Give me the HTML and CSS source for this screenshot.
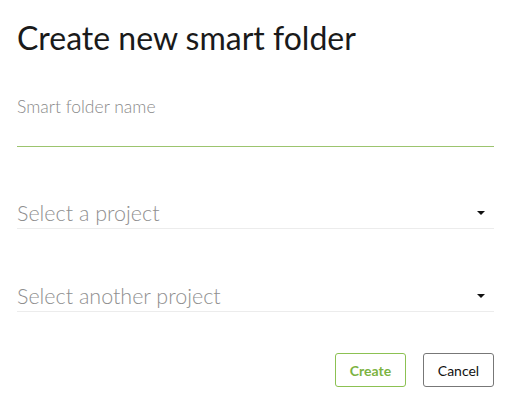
FILE: index.html
```html
<!DOCTYPE html>
<html>
<head>
<meta charset="utf-8">
<link rel="stylesheet" href="styles.css">
</head>
<body>
<div class="dialog">
  <h1 class="title">Create new smart folder</h1>
  <div class="field name-field">
    <label class="field-label">Smart folder name</label>
    <div class="underline active"></div>
  </div>
  <div class="field select-field">
    <div class="select-row">
      <span class="placeholder">Select a project</span>
      <span class="caret"></span>
    </div>
    <div class="underline"></div>
  </div>
  <div class="field select-field">
    <div class="select-row">
      <span class="placeholder">Select another project</span>
      <span class="caret"></span>
    </div>
    <div class="underline"></div>
  </div>
  <div class="actions">
    <button class="btn btn-create">Create</button>
    <button class="btn btn-cancel">Cancel</button>
  </div>
</div>
</body>
</html>
```
FILE: styles.css
```css
html, body {
  margin: 0;
  padding: 0;
  background: #ffffff;
}
body {
  font-family: Lato, "Noto Sans", sans-serif;
}
.dialog {
  padding: 18px 21px 0 17px;
  display: flex;
  flex-direction: column;
}
.title {
  margin: 0;
  font-size: 32px;
  font-weight: 400;
  line-height: 40px;
  color: #1a1a1a;
}
.name-field {
  margin-top: 39px;
}
.field-label {
  display: block;
  font-size: 17.5px;
  font-weight: 300;
  line-height: 20px;
  color: #8a8a8a;
}
.underline {
  height: 1px;
  background: #ececec;
}
.underline.active {
  margin-top: 29px;
  background: #9cc46e;
}
.select-field {
  margin-top: 53px;
}
.select-field + .select-field {
  margin-top: 54px;
}
.select-row {
  box-sizing: border-box;
  display: flex;
  align-items: center;
  justify-content: space-between;
  height: 28px;
  padding-bottom: 2px;
}
.placeholder {
  font-size: 21.5px;
  font-weight: 300;
  color: #8f8f8f;
}
.caret {
  width: 0;
  height: 0;
  border-left: 4px solid transparent;
  border-right: 4px solid transparent;
  border-top: 4px solid #111;
  margin-right: 9px;
}
.actions {
  display: flex;
  justify-content: flex-end;
  gap: 17px;
  margin-top: 41px;
}
.btn {
  font-family: Lato, "Noto Sans", sans-serif;
  font-size: 14px;
  height: 34px;
  width: 71px;
  border-radius: 3px;
  background: #fff;
  padding: 0;
  cursor: pointer;
}
.btn-create {
  border: 1px solid #8cc152;
  color: #7cb342;
  font-weight: 700;
}
.btn-cancel {
  border: 1px solid #777;
  color: #111;
}
```
